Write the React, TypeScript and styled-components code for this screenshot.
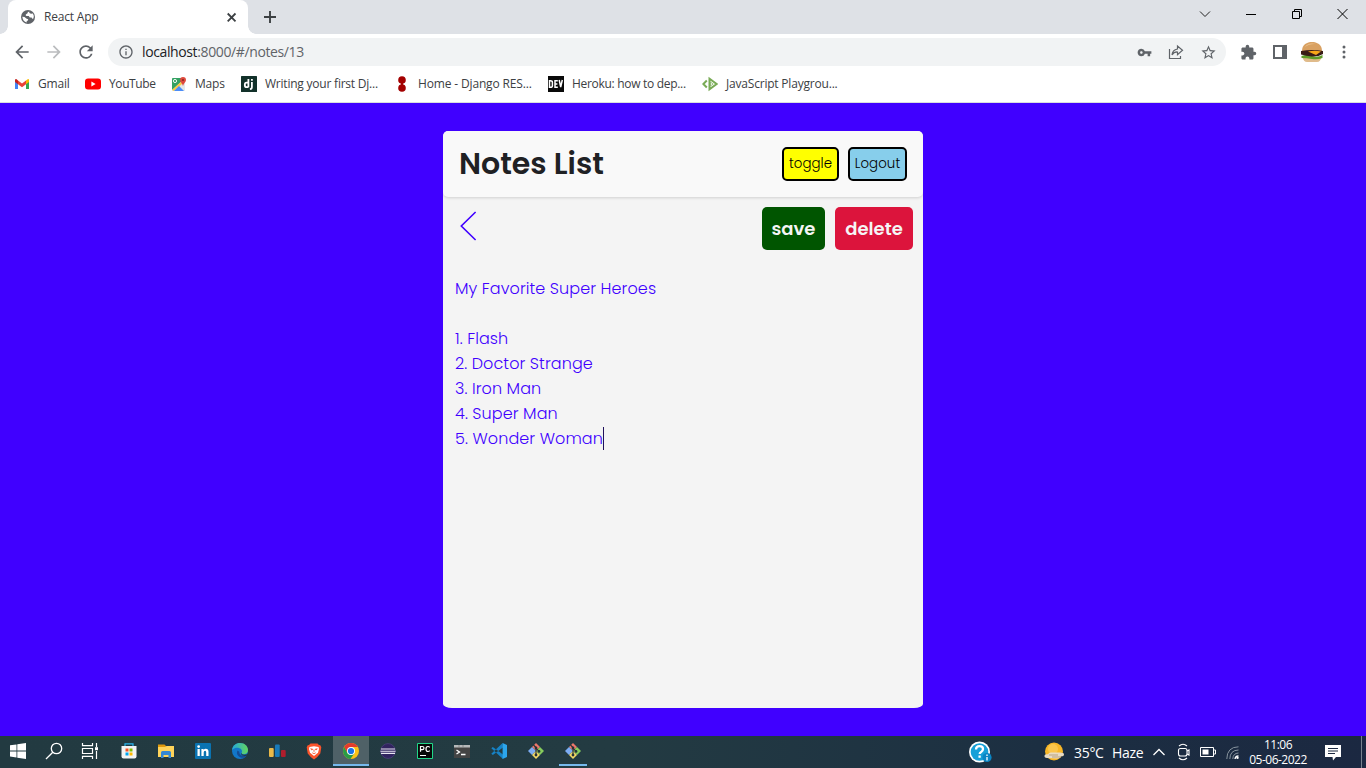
import React from "react";
import styled, { createGlobalStyle } from "styled-components";
import {
  MdArrowBack,
  MdArrowForward,
  MdExtension,
  MdInfoOutline,
  MdRefresh,
  MdStarBorder,
  MdVpnKey,
} from "react-icons/md";

const GlobalStyle = createGlobalStyle`
  * { box-sizing: border-box; }
  body { margin: 0; overflow: hidden; }
  svg { display: block; flex: none; }
  button { margin: 0; cursor: pointer; }
`;

const ui = '"Open Sans", "Noto Sans", sans-serif';
const geometric = 'Poppins, Inter, "Liberation Sans", sans-serif';

const Screen = styled.div`
  width: 1366px;
  height: 768px;
  display: flex;
  flex-direction: column;
  font-family: ${ui};
`;

/* Browser window */

const TabStrip = styled.div`
  height: 34px;
  display: flex;
  align-items: stretch;
  background: #dee1e6;
  padding-left: 8px;
`;

const Tab = styled.div`
  position: relative;
  width: 240px;
  display: flex;
  align-items: center;
  padding: 0 10px 0 12px;
  background: #fff;
  border-radius: 8px 8px 0 0;
  color: #3c4043;
  &::before,
  &::after {
    content: "";
    position: absolute;
    bottom: 0;
    width: 8px;
    height: 8px;
  }
  &::before {
    left: -8px;
    background: radial-gradient(circle at 0 0, transparent 7.5px, #fff 8px);
  }
  &::after {
    right: -8px;
    background: radial-gradient(circle at 100% 0, transparent 7.5px, #fff 8px);
  }
`;

const TabTitle = styled.span`
  flex: 1;
  margin-left: 8px;
  font-size: 12px;
  line-height: 16px;
  letter-spacing: -0.2px;
`;

const NewTab = styled.div`
  display: flex;
  align-items: center;
  margin-left: 15px;
  flex: 1;
`;

const WindowButton = styled.div`
  width: 46px;
  height: 28px;
  display: flex;
  align-items: center;
  justify-content: center;
`;

const Toolbar = styled.div`
  height: 36px;
  display: flex;
  align-items: center;
  padding: 0 6px;
  background: #fff;
`;

const IconSlot = styled.div<{ $tone?: string }>`
  width: 32px;
  height: 28px;
  display: flex;
  align-items: center;
  justify-content: center;
  color: ${(p) => p.$tone ?? "#5f6368"};
`;

const AddressBar = styled.div`
  flex: 1;
  height: 28px;
  margin: 0 6px;
  padding: 0 2px 0 10px;
  display: flex;
  align-items: center;
  border-radius: 14px;
  background: #f1f3f4;
  color: #5f6368;
`;

const Url = styled.span`
  flex: 1;
  margin-left: 8px;
  font-size: 14px;
  line-height: 20px;
  letter-spacing: -0.38px;
  b {
    font-weight: 400;
    color: #202124;
  }
`;

const Bookmarks = styled.div`
  height: 33px;
  display: flex;
  padding: 0 0 4px 14px;
  background: #fff;
  border-bottom: 1px solid #dadce0;
`;

const Bookmark = styled.div<{ $width: number; $track?: number }>`
  width: ${(p) => p.$width}px;
  display: flex;
  align-items: center;
  gap: 8px;
  font-size: 12px;
  color: #3c4043;
  white-space: nowrap;
  letter-spacing: ${(p) => p.$track ?? 0}px;
  span {
    padding-bottom: 2px;
  }
`;

/* Notes application */

const Page = styled.main`
  flex: 1;
  display: flex;
  justify-content: center;
  align-items: flex-start;
  padding-top: 28px;
  background: #4000ff;
`;

const Card = styled.section`
  width: 480px;
  height: 577px;
  overflow: hidden;
  display: flex;
  flex-direction: column;
  background: #f4f4f4;
  border-radius: 5px 5px 9px 9px / 5px 5px 4px 4px;
  font-family: ${geometric};
`;

const CardHeader = styled.header`
  height: 66px;
  display: flex;
  align-items: center;
  padding: 0 16px;
  background: #f9f9f9;
  border-radius: 5px;
  box-shadow: 0 1px 3px rgba(0, 0, 0, 0.15);
`;

const Title = styled.h1`
  flex: 1;
  margin: 0;
  font-size: 30px;
  line-height: 40px;
  font-weight: 600;
  color: #1f2124;
`;

const OutlinedButton = styled.button<{ $width: number; $fill: string }>`
  width: ${(p) => p.$width}px;
  height: 34px;
  margin-left: 9px;
  padding: 0;
  border: 2px solid #000;
  border-radius: 5px;
  background: ${(p) => p.$fill};
  color: #000;
  font: 300 13.33px ${geometric};
  letter-spacing: 0.1px;
`;

const Actions = styled.div`
  height: 62px;
  display: flex;
  align-items: flex-start;
  padding: 10px 10px 0 17px;
  gap: 10px;
`;

const BackArrow = styled.svg`
  margin: 4px auto 0 0;
`;

const SolidButton = styled.button<{ $width: number; $fill: string }>`
  width: ${(p) => p.$width}px;
  height: 43px;
  padding: 0;
  border: 0;
  border-radius: 5px;
  background: ${(p) => p.$fill};
  color: #f5f5f5;
  font: 600 18px ${geometric};
`;

const NoteText = styled.div`
  flex: 1;
  padding: 17px 12px;
  white-space: pre-wrap;
  font-size: 16px;
  line-height: 25px;
  font-weight: 300;
  letter-spacing: 0.09px;
  color: #4000ff;
`;

const Caret = styled.span`
  display: inline-block;
  width: 1px;
  height: 23px;
  vertical-align: -6px;
  background: #20105c;
`;

/* Windows taskbar */

const Taskbar = styled.footer`
  height: 32px;
  display: flex;
  align-items: stretch;
  background: linear-gradient(90deg, #223a41 0%, #233b42 45%, #1c2f42 76%, #1b2841 100%);
  color: #fff;
`;

const TaskGroup = styled.div<{ $gap?: number; $start?: number }>`
  display: flex;
  gap: ${(p) => p.$gap ?? 0}px;
  margin-left: ${(p) => p.$start ?? 0}px;
`;

const Task = styled.div<{ $active?: boolean; $open?: boolean }>`
  position: relative;
  width: 36px;
  display: flex;
  align-items: center;
  justify-content: center;
  padding-bottom: 2px;
  background: ${(p) =>
    p.$active ? "linear-gradient(#4f6167, #4f6167) top / 100% 28px no-repeat" : "none"};
  &::after {
    content: "";
    display: ${(p) => (p.$active || p.$open ? "block" : "none")};
    position: absolute;
    left: ${(p) => (p.$active ? 0 : 4)}px;
    right: ${(p) => (p.$active ? 0 : 4)}px;
    bottom: 2px;
    height: 2px;
    background: #76b9ed;
  }
`;

const Tray = styled.div`
  margin-left: auto;
  display: flex;
  align-items: center;
`;

const TrayItem = styled.div<{ $width: number }>`
  width: ${(p) => p.$width}px;
  display: flex;
  align-items: center;
  white-space: nowrap;
`;

const Weather = styled(TrayItem)`
  font-size: 14px;
  line-height: 18px;
  padding-top: 2px;
  letter-spacing: -0.3px;
`;

const Clock = styled.div`
  width: 62px;
  display: flex;
  flex-direction: column;
  align-items: center;
  font-size: 12px;
  line-height: 15px;
  letter-spacing: -0.5px;
  white-space: nowrap;
`;

const ShowDesktop = styled.div`
  width: 5px;
  height: 32px;
  border-left: 1px solid #77828e;
`;

const GlobeIcon = () => (
  <svg width="16" height="16" viewBox="0 0 16 16">
    <circle cx="8" cy="8" r="7" fill="#5f6368" />
    <path d="M9.2 2.4Q7.2 3 7.5 4.3L5.8 5.4q-.5 1 .7 1.5h2.3l1 1.5h1.8l.6 1.4 1.2-.2q1-2.8-.5-5L11 4.7 9.4 4z" fill="#fff" />
    <path d="M2.3 7.8l2.2.3 2.2 1.6 1.5.5-.3 1.4-1.2.5v1.4Q3 12.8 2.3 7.8z" fill="#fff" />
  </svg>
);

const GmailIcon = () => (
  <svg width="16" height="16" viewBox="0 0 16 16">
    <path d="M1 4v9h3V7z" fill="#4285f4" />
    <path d="M15 4v9h-3V7z" fill="#34a853" />
    <path d="M12 4.5l2-1.4q1-.1 1 1v2L12 8.3z" fill="#fbbc04" />
    <path d="M1 4.1q0-1.1 1.3-1L4 4.4v3.9L1 6z" fill="#c5221f" />
    <path d="M4 4.4L8 7.4l4-3v3.9l-4 3-4-3z" fill="#ea4335" />
  </svg>
);

const YouTubeIcon = () => (
  <svg width="16" height="16" viewBox="0 0 16 16">
    <rect y="2.5" width="16" height="11" rx="3" fill="#f00" />
    <path d="M6.4 5.6v4.8L10.6 8z" fill="#fff" />
  </svg>
);

const MapsIcon = () => (
  <svg width="16" height="16" viewBox="0 0 16 16">
    <rect x="1" y="2" width="13" height="13" rx="1" fill="#e5e8e8" />
    <path d="M1 3q0-1 1-1h8v4L1 14z" fill="#34a162" />
    <path d="M1 14L10 5.7l1.3 2.1L3 15z" fill="#fbcb43" />
    <path d="M3 15l5-5 5 5z" fill="#4b8df8" />
    <circle cx="4" cy="5" r="1.6" fill="none" stroke="#fff" strokeWidth=".9" />
    <path d="M12 1a3 3 0 0 1 3 3c0 2-2.5 3.4-3 6-.5-2.6-3-4-3-6a3 3 0 0 1 3-3z" fill="#df493d" />
    <circle cx="12" cy="4" r="1.1" fill="#8c2820" />
  </svg>
);

const DjangoIcon = () => (
  <svg width="16" height="16" viewBox="0 0 16 16">
    <rect width="16" height="16" rx=".5" fill="#12312a" />
    <path d="M7.4 3v8.2M7.4 6.6H5.6q-1.8 0-1.8 2.3 0 2.3 2 2.3h1.6M10.9 6v5q0 2-2 2.2" fill="none" stroke="#fff" strokeWidth="1.8" />
    <path d="M10 3h1.8v1.8H10z" fill="#fff" />
  </svg>
);

const DotsIcon = () => (
  <svg width="16" height="16" viewBox="0 0 16 16">
    <path d="M7 5h2v6H7z" fill="#a30000" />
    <circle cx="8" cy="4" r="3.8" fill="#a30000" />
    <circle cx="8" cy="12" r="3.8" fill="#a30000" />
  </svg>
);

const DevIcon = () => (
  <svg width="16" height="16" viewBox="0 0 16 16">
    <path d="M0 0h16v16H0z" fill="#090909" />
    <path d="M1.5 4.7v6.6h.9q2 0 2-1.6V6.3q0-1.6-2-1.6zM9.8 4.7H7v6.6h2.8M7 8h2.4M11.2 4l1.5 7 1.6-7" fill="none" stroke="#fff" strokeWidth="1.5" />
  </svg>
);

const PlaygroundIcon = () => (
  <svg width="16" height="16" viewBox="0 0 16 16" fill="none" stroke="#79ab56" strokeWidth="2">
    <path d="M4.8 4.5L1.3 8l3.5 3.5M7.5 2.7v10.6L14.6 8z" />
    <path d="M8.4 6v4l2.8-2z" strokeWidth=".7" />
  </svg>
);

const BurgerAvatar = () => (
  <svg width="22" height="22" viewBox="0 0 22 22">
    <path d="M1 10C1 3.5 6 1 11 1s10 2.500 10 9z" fill="#d9a162" />
    <path d="M4 6q3-5 11-3-7-.5-11 3" fill="#edc693" />
    <path d="M1.500 16h19q-1 5-4.500 5H6q-3.500 0-4.500-5" fill="#e0bb8b" />
    <path d="M.5 15q5-2 10.500 0t10.500-1v3q-5 2-10.500 1T.5 17z" fill="#5f9c28" />
    <path d="M0 10q11-2 22 0v3q-5 3-11 2.500T0 13.500z" fill="#3a1c16" />
    <path d="M7 10.500q7-1.500 13 0l-5 3.500z" fill="#f8a718" />
  </svg>
);

const WindowsIcon = () => (
  <svg width="16" height="16" viewBox="0 0 16 16" fill="#fff">
    <path d="M0 2.3l6.5-.9v6.1H0zM7.3 1.2L16 0v7.5H7.3zM0 8.4h6.5v6.1L0 13.6zM7.3 8.4H16V16l-8.7-1.2z" />
  </svg>
);

const SearchIcon = () => (
  <svg width="18" height="18" viewBox="0 0 18 18" fill="none" stroke="#fff" strokeWidth="1.3">
    <circle cx="11.5" cy="6.5" r="5.2" />
    <path d="M7.8 10.2L1 17" />
  </svg>
);

const TaskViewIcon = () => (
  <svg width="18" height="16" viewBox="0 0 18 16" fill="none" stroke="#fff" strokeWidth="1.2">
    <path d="M1.5 0v2.7h10V0M1.5 5.5h10v5h-10zM1.5 16v-2.7h10V16M15.5 0v4M15.5 8v8" />
    <path d="M14 4.2h3v3h-3z" fill="#fff" stroke="none" />
  </svg>
);

const StoreIcon = () => (
  <svg width="16" height="16" viewBox="0 0 16 16">
    <path d="M4 3.500V.8h8v2.700" fill="none" stroke="#29b6ef" strokeWidth="1.2" />
    <path d="M.5 3h15v10.5q0 2-2 2h-11q-2 0-2-2z" fill="#f3f3f3" />
    <path d="M4.5 5.5h3v3h-3z" fill="#f25022" />
    <path d="M8.5 5.5h3v3h-3z" fill="#7fba00" />
    <path d="M4.5 9.5h3v3h-3z" fill="#00a4ef" />
    <path d="M8.5 9.5h3v3h-3z" fill="#ffb900" />
  </svg>
);

const ExplorerIcon = () => (
  <svg width="16" height="16" viewBox="0 0 16 16">
    <path d="M0 1.5h6.5L8 3v3H0z" fill="#e09a0c" />
    <path d="M0 4h7l1.500-1H16v11H0z" fill="#ffd45a" />
    <path d="M3 15V9.5Q3 8 4.5 8h7Q13 8 13 9.5V15h-2.5v-3h-5v3z" fill="#3487d2" />
  </svg>
);

const LinkedInIcon = () => (
  <svg width="16" height="16" viewBox="0 0 16 16">
    <rect width="16" height="16" rx="1" fill="#0a73b1" />
    <path d="M2.5 6h2.3v7H2.5zM6.4 6h2.2v1q.7-1.2 2.2-1.2 2.7 0 2.7 3V13h-2.3V9.4q0-1.6-1.1-1.6-1.4 0-1.4 1.7V13H6.4z" fill="#fff" />
    <circle cx="3.65" cy="3.6" r="1.35" fill="#fff" />
  </svg>
);

const EdgeIcon = () => (
  <svg width="16" height="16" viewBox="0 0 16 16">
    <defs>
      <linearGradient id="edgeTop" x1="0" x2="1">
        <stop stopColor="#25a7dc" />
        <stop offset="1" stopColor="#63d85b" />
      </linearGradient>
    </defs>
    <circle cx="8" cy="8" r="8" fill="#1277c9" />
    <path d="M0 7C1 2 4 0 8 0c5 0 8 3.5 8 7 0 3-2 4.3-4.5 4.3-2 0-2.5-1-1.6-2.2C11 6 5 2.5 0 7" fill="url(#edgeTop)" />
    <path d="M5.5 7.5c-2 4 1.5 7.5 6 7.3 1.7-.2 3-1.5 3.5-2.8-3 2-8 .5-7.7-3.3z" fill="#154c95" />
    <path d="M9.600 9.500c-.5 2 2.500 2.800 5.400 1.800l1-.8v2l-1.200.3q-4.800 1-5.800-1.800z" fill="#223a42" />
  </svg>
);

const ChartIcon = () => (
  <svg width="17" height="16" viewBox="0 0 17 16">
    <rect x="0" y="5" width="4.7" height="9" rx="1" fill="#e9b949" />
    <rect x="6" y="1.5" width="4.7" height="12.5" rx="1" fill="#187ab9" />
    <rect x="12" y="7" width="4.7" height="7" rx="1" fill="#af1e2d" />
  </svg>
);

const BraveIcon = () => (
  <svg width="16" height="17" viewBox="0 0 16 17">
    <path d="M4.5.5h7L13 2l1.3.2 1 2-1 6.2L11 14.2 8 16.5l-3-2.3-3.3-3.8-1-6.2 1-2L3 2z" fill="#fb542b" />
    <path d="M3.5 4L8 3.300l4.500.7.5 2-1 3.800L8 13 4 9.800 3 6z" fill="#fff" />
    <path d="M4.700 5.800l2 .4-.7.900zM11.300 5.800l-2 .4.7.900zM8 6.500v2.300M6.300 9.800L8 10.700l1.700-.9" fill="none" stroke="#fb542b" strokeWidth=".9" />
  </svg>
);

const ChromeIcon = () => (
  <svg width="16" height="16" viewBox="0 0 16 16">
    <circle cx="8" cy="8" r="8" fill="#fbc116" />
    <path d="M1.1 4A8 8 0 0 1 14.9 4H8v4L4.5 10z" fill="#e33b2e" />
    <path d="M1.1 4A8 8 0 0 0 7.5 16L11.5 10 8 11.5 4.5 10z" fill="#299c47" />
    <circle cx="8" cy="8" r="4" fill="#fff" />
    <circle cx="8" cy="8" r="3.1" fill="#1a73e8" />
  </svg>
);

const EclipseIcon = () => (
  <svg width="16" height="16" viewBox="0 0 16 16">
    <circle cx="8" cy="8" r="7.400" fill="#31235f" stroke="#4b407b" strokeWidth=".8" />
    <path d="M1 6h14M.5 8.2h15M1 10.400h14" stroke="#e8e5f1" strokeWidth="1.1" />
  </svg>
);

const PyCharmIcon = () => (
  <svg width="16" height="16" viewBox="0 0 16 16">
    <path d="M.5.5h15v15H.5z" fill="#080808" stroke="#21d789" />
    <path d="M3.5 8.7V3.5h1.7q1.8 0 1.8 1.6t-1.8 1.6H3.5M12.8 4.3Q12 3.5 11 3.5 9 3.5 9 6t2 2.5q1 0 1.8-.8M3 12.500h6" fill="none" stroke="#fff" strokeWidth="1.2" />
  </svg>
);

const TerminalIcon = () => (
  <svg width="16" height="13" viewBox="0 0 16 13">
    <path d="M0 0h16v13H0z" fill="#444" />
    <path d="M0 0h16v2.5H0z" fill="#b6b9ba" />
    <path d="M5 0v2.5M9 0v2.5" stroke="#777" strokeWidth=".7" />
    <path d="M2.5 5l3 2-3 2M7 9.5h4.5" fill="none" stroke="#fff" strokeWidth="1.3" />
  </svg>
);

const CodeIcon = () => (
  <svg width="16" height="16" viewBox="0 0 16 16">
    <path d="M.3 5.200l1.500-1.200L12 11.500V16zM11.600 0L.3 10.800 1.800 12 12 4.500z" fill="#1682c5" />
    <path d="M11.6 0L16 2v12l-4.4 2z" fill="#2ca6ec" />
  </svg>
);

const GitIcon = () => (
  <svg width="16" height="16" viewBox="0 0 16 16">
    <path d="M8 0l4 4-4 4-4-4z" fill="#ee776a" />
    <path d="M4 4l4 4-4 4-4-4z" fill="#7cacf3" />
    <path d="M12 4l4 4-4 4-4-4z" fill="#86cc5d" />
    <path d="M8 8l4 4-4 4-4-4z" fill="#f4d967" />
    <path d="M5.5 2L8 4.5V13M8 5l3 3.3" stroke="#263238" strokeWidth="1.1" fill="none" />
    <g fill="#263238">
      <circle cx="8" cy="5" r="1.4" />
      <circle cx="11" cy="8.4" r="1.4" />
      <circle cx="8" cy="12" r="1.4" />
    </g>
  </svg>
);

const HelpIcon = () => (
  <svg width="23" height="22" viewBox="0 0 23 22">
    <circle cx="10.5" cy="11" r="10.500" fill="#fff" />
    <circle cx="10.5" cy="11" r="8.800" fill="#16a0d8" />
    <path d="M7 8.5q0-3.4 3.6-3.4 3.4 0 3.4 3 0 1.8-1.8 2.8-1.5.8-1.5 2.200M10.6 14.6v2.200" fill="none" stroke="#fff" strokeWidth="2.3" />
    <circle cx="18" cy="16.5" r="4.6" fill="#0a85c4" />
    <path d="M18 13.6v1.3M18 16v3.5" stroke="#fff" strokeWidth="1.3" />
  </svg>
);

const WeatherIcon = () => (
  <svg width="21" height="20" viewBox="0 0 21 20">
    <circle cx="10" cy="9.5" r="9" fill="#f8b727" />
    <circle cx="9" cy="7" r="5" fill="#fbc64c" />
    <path d="M3 16q-3-.2-2.5-2.4Q1 12 4 12.3q1-2.3 4-1.7h8q4 0 4 1.8t-3 1.9q-1 2.7-5 2.1z" fill="#e8dbc4" />
    <path d="M5 13h9M8 15h9" stroke="#b9a17e" />
  </svg>
);

const bookmarks = [
  { label: "Gmail", width: 71, icon: <GmailIcon />, track: -0.2 },
  { label: "YouTube", width: 86, icon: <YouTubeIcon />, track: -0.4 },
  { label: "Maps", width: 70, icon: <MapsIcon />, track: -0.2 },
  { label: "Writing your first Dj...", width: 153, icon: <DjangoIcon />, track: -0.22 },
  { label: "Home - Django RES...", width: 154, icon: <DotsIcon />, track: -0.15 },
  { label: "Heroku: how to dep...", width: 154, icon: <DevIcon />, track: -0.3 },
  { label: "JavaScript Playgrou...", width: 140, icon: <PlaygroundIcon />, track: -0.2 },
];

const note = `My Favorite Super Heroes

1. Flash
2. Doctor Strange
3. Iron Man
4. Super Man
5. Wonder Woman`;

const tasks = [
  { icon: <StoreIcon /> },
  { icon: <ExplorerIcon /> },
  { icon: <LinkedInIcon /> },
  { icon: <EdgeIcon /> },
  { icon: <ChartIcon /> },
  { icon: <BraveIcon /> },
  { icon: <ChromeIcon />, active: true },
  { icon: <EclipseIcon /> },
  { icon: <PyCharmIcon /> },
  { icon: <TerminalIcon /> },
  { icon: <CodeIcon /> },
  { icon: <GitIcon /> },
  { icon: <GitIcon />, open: true },
];

export default function App() {
  return (
    <Screen>
      <GlobalStyle />
      <TabStrip>
        <Tab>
          <GlobeIcon />
          <TabTitle>React App</TabTitle>
          <svg width="13" height="13" viewBox="0 0 13 13" stroke="#3c4043" strokeWidth="1.8">
            <path d="M2.700 2.500l7.800 7.800M10.500 2.500l-7.800 7.800" />
          </svg>
        </Tab>
        <NewTab>
          <svg width="14" height="14" viewBox="0 0 14 14" stroke="#3c4043" strokeWidth="1.9">
            <path d="M7 1v12M1 7h12" />
          </svg>
        </NewTab>
        <WindowButton>
          <svg width="12" height="8" viewBox="0 0 12 8" fill="none" stroke="#222">
            <path d="M1 1.5l5 5 5-5" />
          </svg>
        </WindowButton>
        <WindowButton>
          <svg width="10" height="10" viewBox="0 0 10 10" stroke="#000">
            <path d="M0 5.5h10" />
          </svg>
        </WindowButton>
        <WindowButton>
          <svg width="10" height="10" viewBox="0 0 10 10" fill="none" stroke="#000">
            <path d="M.5 2.5h7v7h-7zM2.5 2.5v-2h7v7h-2" />
          </svg>
        </WindowButton>
        <WindowButton>
          <svg width="12" height="12" viewBox="0 0 12 12" stroke="#000">
            <path d="M.5 1l10 10M10.500 1l-10 10" />
          </svg>
        </WindowButton>
      </TabStrip>

      <Toolbar>
        <IconSlot><MdArrowBack size={20} /></IconSlot>
        <IconSlot $tone="#babcbe"><MdArrowForward size={20} /></IconSlot>
        <IconSlot><MdRefresh size={20} /></IconSlot>
        <AddressBar>
          <MdInfoOutline size={16} />
          <Url><b>localhost</b>:8000/#/notes/13</Url>
          <IconSlot><MdVpnKey size={15} /></IconSlot>
          <IconSlot>
            <svg width="16" height="16" viewBox="0 0 16 16" fill="none" stroke="#5f6368" strokeWidth="1.2">
              <path d="M1.5 5v9.5h11V12M9.5 5V2l5 4.3-5 4.4V8Q6 7.7 4 10.8 4.5 6 9.5 5z" />
            </svg>
          </IconSlot>
          <IconSlot><MdStarBorder size={17} /></IconSlot>
        </AddressBar>
        <IconSlot><MdExtension size={17} /></IconSlot>
        <IconSlot>
          <svg width="14" height="14" viewBox="0 0 14 14" fill="#5f6368">
            <path fillRule="evenodd" d="M0 0h14v14H0zM2 2v10h7V2z" />
          </svg>
        </IconSlot>
        <IconSlot><BurgerAvatar /></IconSlot>
        <IconSlot>
          <svg width="4" height="14" viewBox="0 0 4 14" fill="#5f6368">
            <circle cx="2" cy="2" r="1.5" />
            <circle cx="2" cy="7" r="1.5" />
            <circle cx="2" cy="12" r="1.5" />
          </svg>
        </IconSlot>
      </Toolbar>

      <Bookmarks>
        {bookmarks.map((b) => (
          <Bookmark key={b.label} $width={b.width} $track={b.track}>
            {b.icon}
            <span>{b.label}</span>
          </Bookmark>
        ))}
      </Bookmarks>

      <Page>
        <Card>
          <CardHeader>
            <Title>Notes List</Title>
            <OutlinedButton $width={57} $fill="#ffff00">toggle</OutlinedButton>
            <OutlinedButton $width={59} $fill="#87ceeb">Logout</OutlinedButton>
          </CardHeader>
          <Actions>
            <BackArrow width="17" height="30" viewBox="0 0 17 30" fill="none" stroke="#4000ff" strokeWidth="1.6">
              <path d="M15.600 1L1.300 15l14.300 14" />
            </BackArrow>
            <SolidButton $width={63} $fill="#005500">save</SolidButton>
            <SolidButton $width={78} $fill="#dc143c">delete</SolidButton>
          </Actions>
          <NoteText>
            {note}
            <Caret />
          </NoteText>
        </Card>
      </Page>

      <Taskbar>
        <TaskGroup>
          <Task><WindowsIcon /></Task>
          <Task><SearchIcon /></Task>
          <Task><TaskViewIcon /></Task>
        </TaskGroup>
        <TaskGroup $gap={1} $start={3}>
          {tasks.map((t, i) => (
            <Task key={i} $active={t.active} $open={t.open}>{t.icon}</Task>
          ))}
        </TaskGroup>
        <Tray>
          <TrayItem $width={75}><HelpIcon /></TrayItem>
          <TrayItem $width={30}><WeatherIcon /></TrayItem>
          <Weather $width={38}>35°C</Weather>
          <Weather $width={41}>Haze</Weather>
          <TrayItem $width={24}>
            <svg width="12" height="8" viewBox="0 0 12 8" fill="none" stroke="#fff" strokeWidth="1.3">
              <path d="M.5 7L6 1.5 11.5 7" />
            </svg>
          </TrayItem>
          <TrayItem $width={23}>
            <svg width="14" height="18" viewBox="0 0 14 18" fill="none" stroke="#fff" strokeWidth="1.1">
              <path d="M2 3q4-3.5 8 0M2 15q4 3.5 8 0M10 8l2-1v5l-2-1" />
              <rect x="1.5" y="5.5" width="8.5" height="7.5" rx="2" />
            </svg>
          </TrayItem>
          <TrayItem $width={26}>
            <svg width="16" height="10" viewBox="0 0 16 10" fill="none" stroke="#fff">
              <path d="M.5.5h13v9H.5zM13.5 3h2v4h-2" />
              <path d="M2.5 2.5h6v5h-6z" fill="#fff" stroke="none" />
            </svg>
          </TrayItem>
          <TrayItem $width={21}>
            <svg width="13" height="13" viewBox="0 0 13 13" fill="none" stroke="#87939e">
              <path d="M.8 13Q1 1 12.5.8M3.8 13Q4 4.2 12.5 4M6.8 13Q7 7.3 12.5 7" />
              <path d="M9 13q.2-3 3.5-3.2" stroke="#fff" strokeWidth="1.3" />
              <circle cx="11.5" cy="11.8" r="1.2" fill="#fff" stroke="none" />
            </svg>
          </TrayItem>
          <Clock>
            <span>11:06</span>
            <span>05-06-2022</span>
          </Clock>
          <TrayItem $width={52}>
            <svg width="17" height="17" viewBox="0 0 17 17" style={{ marginLeft: 16 }}>
              <path d="M0 1h16v12h-5l-3 3.5L7.5 13H0z" fill="#fff" />
              <path d="M3 4.5h10M3 7h10M3 9.5h7" stroke="#1b2841" />
            </svg>
          </TrayItem>
          <ShowDesktop />
        </Tray>
      </Taskbar>
    </Screen>
  );
}
